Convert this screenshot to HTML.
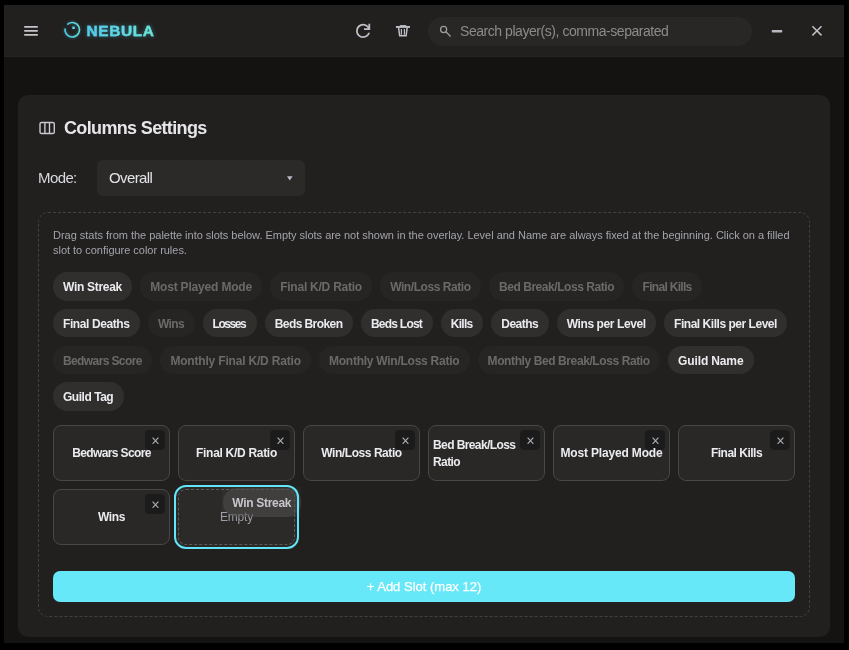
<!DOCTYPE html>
<html><head><meta charset="utf-8">
<style>
*{box-sizing:border-box;margin:0;padding:0}
html,body{width:849px;height:650px;background:#000;overflow:hidden;font-family:"Liberation Sans",sans-serif}
.win{will-change:transform}
.win{position:absolute;left:4px;top:5px;width:840px;height:638px;background:#141312;overflow:hidden}
.hdr{position:absolute;left:0;top:0;width:840px;height:52px;background:#21201f;border-bottom:1px solid #252423}
.abs{position:absolute}
.burger{left:20px;top:21px;width:14px;height:10px}
.burger i{position:absolute;left:0;width:14px;height:2px;background:#c9c9d1;border-radius:1px}
.logo{left:59px;top:16px;width:20px;height:20px}
.brand{left:82.6px;top:15.9px;font-weight:bold;font-size:15.4px;letter-spacing:0.62px;line-height:20px;
  background:linear-gradient(90deg,#52c8ee,#60d8e6 50%,#72e6cc);-webkit-background-clip:text;background-clip:text;color:transparent;-webkit-text-stroke:0.35px rgba(96,214,232,.85);
  filter:drop-shadow(0 0 2px rgba(80,210,235,.4))}
.search{left:424px;top:12px;width:324px;height:29px;border-radius:15px;background:#282726}
.ph{left:32px;top:0;line-height:29px;font-size:14px;letter-spacing:-0.45px;color:#8b8b8b;white-space:nowrap}
.card{position:absolute;left:14px;top:90px;width:812px;height:542px;background:#21201f;border-radius:10px}
.title{left:46px;top:21px;font-size:18px;font-weight:bold;color:#e6e6ea;letter-spacing:-0.65px;line-height:24px;white-space:nowrap}
.mode{left:20px;top:65px;font-size:15px;letter-spacing:-0.6px;color:#d8d8de;line-height:36px}
.select{left:79px;top:65px;width:208px;height:36px;border-radius:6px;background:#2b2a29}
.select span{position:absolute;left:12px;top:0;line-height:36px;font-size:15px;color:#e4e4e8;letter-spacing:-0.6px}
.select svg{position:absolute;left:189.9px;top:16px}
.dash{position:absolute;left:20px;top:117px;width:772px;height:404.5px;border:1px dashed #424140;border-radius:10px}
.desc{position:absolute;left:14px;top:15px;width:745px;font-size:11px;line-height:15px;color:#a3a3ac;letter-spacing:-0.02px}
.chips{position:absolute;left:14px;top:59px;width:742px;display:flex;flex-wrap:wrap;gap:8.3px 8px}
.chip{height:28.5px;border-radius:15px;background:#302f2e;color:#ebebef;font-weight:bold;font-size:12px;line-height:31px;text-align:center;white-space:nowrap;letter-spacing:-0.3px}
.chip.d{background:#262524;color:#6b6a6a}
.slots{position:absolute;left:14px;top:212px;width:742px;display:grid;grid-template-columns:repeat(6,117px);gap:8px}
.slot{position:relative;height:56px;border:1px solid #484746;border-radius:8px;background:#292827;display:flex;align-items:center;justify-content:center;padding:0 4px;color:#ebebef;font-weight:bold;font-size:12px;letter-spacing:-0.55px;line-height:17px}
.slot.empty{border:1px dashed #5b5a59;background:#2b2a29;box-shadow:0 0 0 2px #2b2a29;color:#9d9da5;font-weight:normal;letter-spacing:-0.2px}
.ring{position:absolute;left:134.7px;top:271.7px;width:125.3px;height:64.3px;border:2.3px solid #62e5f8;border-radius:12px}
.ghost{position:absolute;left:182.5px;top:274.4px;width:79.3px;height:30px;background:rgba(255,255,255,.025)}
.ghost div{position:absolute;left:1px;top:1px;width:78.5px;height:28.5px;border-radius:14px;background:rgba(78,77,76,.55);color:#c6c6cb;font-weight:bold;font-size:12px;letter-spacing:-0.3px;line-height:30.5px;text-align:center}
.slot span{position:relative;top:.7px}
.slot .x{position:absolute;right:4.3px;top:4.1px;width:19.6px;height:19.6px;border-radius:4.5px;background:#1c1b1b}
.slot .x svg{position:absolute;left:6.4px;top:6.8px}
.btn{position:absolute;left:14px;top:358px;width:742px;height:31px;border-radius:7px;background:#67e8f9;color:#fff;font-size:13px;text-align:center;line-height:31px;-webkit-text-stroke:0.25px #fff}
</style></head><body>
<div class="win">
  <div class="hdr">
    <div class="abs brand">NEBULA</div>
    <div class="abs search"><div class="abs ph">Search player(s), comma-separated</div></div>
    <svg class="abs" style="left:0;top:0;overflow:visible" width="840" height="52" viewBox="4 5 840 52">
      <g fill="#c4c4cc"><rect x="24" y="26.1" width="14" height="1.7" rx=".8"/><rect x="24" y="30.1" width="14" height="1.7" rx=".8"/><rect x="24" y="34.1" width="14" height="1.7" rx=".8"/></g>
      <defs><linearGradient id="lg" x1="0" x2="1" y1="0" y2="0"><stop offset="0" stop-color="#4ac5e8"/><stop offset="1" stop-color="#62e0d6"/></linearGradient></defs><g style="filter:drop-shadow(0 0 1.5px rgba(77,208,236,.45))"><path d="M65.02 29.13A7.25 7.25 0 1 0 67.74 24.03" fill="none" stroke="url(#lg)" stroke-width="1.6" stroke-linecap="round"/><rect x="72.3" y="26.6" width="2.5" height="2.5" rx=".3" fill="#55d6f0"/></g>
      <svg x="352.45" y="20.25" width="21.3" height="21.3" viewBox="0 -960 960 960"><path fill="#bdbdc5" d="M480-160q-134 0-227-93t-93-227q0-134 93-227t227-93q69 0 132 28.5T720-690v-110h80v280H520v-80h168q-32-56-87.5-88T480-720q-100 0-170 70t-70 170q0 100 70 170t170 70q77 0 139-44t87-116h84q-28 106-114 173t-196 67Z"/></svg>
      <g fill="#bdbdc5"><rect x="395.9" y="26" width="14.1" height="1.9"/><rect x="399.9" y="25.1" width="6.4" height="1.2"/></g>
      <g fill="none" stroke="#bdbdc5" stroke-width="1.5"><path d="M398.55 27.6L399.65 35.65H406.15L407.15 27.6"/><path d="M401.4 28.9V34.7M404.4 28.9V34.7" stroke-width="1.2"/></g>
      <g fill="none" stroke="#9c9c9c" stroke-width="1.3"><circle cx="443.6" cy="29.5" r="3.05"/><path d="M445.9 31.8L450.6 36.5"/></g>
      <rect x="771.7" y="30" width="10.6" height="2.4" rx="1" fill="#b9b9c1"/>
      <path d="M812.4 26.3L821.5 35.4M821.5 26.3L812.4 35.4" stroke="#c0c0c8" stroke-width="1.5" fill="none"/>
    </svg>
  </div>
  <div class="card">
    <svg class="abs" style="left:0;top:0;overflow:visible" width="60" height="60" viewBox="18 95 60 60"><g fill="none" stroke="#c9c9d1" stroke-width="1.4"><rect x="40" y="122.5" width="14.3" height="11" rx="1.6"/><path d="M44.9 122.5V133.5M49.5 122.5V133.5"/></g></svg>
    <div class="abs title">Columns Settings</div>
    <div class="abs mode">Mode:</div>
    <div class="abs select"><span>Overall</span><svg width="6" height="5" viewBox="0 0 6 5"><path d="M0 .2H5.6L2.8 4.6Z" fill="#b9b9c3"/></svg></div>
    <div class="dash">
      <div class="desc">Drag stats from the palette into slots below. Empty slots are not shown in the overlay. Level and Name are always fixed at the beginning. Click on a filled slot to configure color rules.</div>
      <div class="chips">
        <div class="chip" style="width:79.2px;letter-spacing:-0.302px;text-indent:-0.302px">Win Streak</div>
        <div class="chip d" style="width:122px;letter-spacing:-0.179px;text-indent:-0.179px">Most Played Mode</div>
        <div class="chip d" style="width:102px;letter-spacing:-0.239px;text-indent:-0.239px">Final K/D Ratio</div>
        <div class="chip d" style="width:100.8px;letter-spacing:-0.443px;text-indent:-0.443px">Win/Loss Ratio</div>
        <div class="chip d" style="width:135.5px;letter-spacing:-0.450px;text-indent:-0.450px">Bed Break/Loss Ratio</div>
        <div class="chip d" style="width:69.8px;letter-spacing:-0.689px;text-indent:-0.689px">Final Kills</div>
        <div class="chip" style="width:86.9px;letter-spacing:-0.405px;text-indent:-0.405px">Final Deaths</div>
        <div class="chip d" style="width:46.7px;letter-spacing:-0.621px;text-indent:-0.621px">Wins</div>
        <div class="chip" style="width:54.2px;letter-spacing:-1.432px;text-indent:-1.432px">Losses</div>
        <div class="chip" style="width:88.2px;letter-spacing:-0.583px;text-indent:-0.583px">Beds Broken</div>
        <div class="chip" style="width:71.9px;letter-spacing:-0.764px;text-indent:-0.764px">Beds Lost</div>
        <div class="chip" style="width:42.4px;letter-spacing:-0.736px;text-indent:-0.736px">Kills</div>
        <div class="chip" style="width:57.5px;letter-spacing:-0.503px;text-indent:-0.503px">Deaths</div>
        <div class="chip" style="width:99.3px;letter-spacing:-0.407px;text-indent:-0.407px">Wins per Level</div>
        <div class="chip" style="width:123.4px;letter-spacing:-0.466px;text-indent:-0.466px">Final Kills per Level</div>
        <div class="chip d" style="width:99.4px;letter-spacing:-0.610px;text-indent:-0.610px">Bedwars Score</div>
        <div class="chip d" style="width:150.6px;letter-spacing:-0.185px;text-indent:-0.185px">Monthly Final K/D Ratio</div>
        <div class="chip d" style="width:150.6px;letter-spacing:-0.252px;text-indent:-0.252px">Monthly Win/Loss Ratio</div>
        <div class="chip d" style="width:182.5px;letter-spacing:-0.403px;text-indent:-0.403px">Monthly Bed Break/Loss Ratio</div>
        <div class="chip" style="width:85.5px;letter-spacing:-0.132px;text-indent:-0.132px">Guild Name</div>
        <div class="chip" style="width:70.7px;letter-spacing:-0.469px;text-indent:-0.469px">Guild Tag</div>
      </div>
      <div class="slots">
        <div class="slot"><div class="x"><svg width="7" height="7.4" viewBox="0 0 7 7.4"><path d="M.6.6L6.4 6.8M6.4.6L.6 6.8" stroke="#aeaeb6" stroke-width="1.15" fill="none"/></svg></div><span style="letter-spacing:-0.618px">Bedwars Score</span></div>
        <div class="slot"><div class="x"><svg width="7" height="7.4" viewBox="0 0 7 7.4"><path d="M.6.6L6.4 6.8M6.4.6L.6 6.8" stroke="#aeaeb6" stroke-width="1.15" fill="none"/></svg></div><span style="letter-spacing:-0.296px">Final K/D Ratio</span></div>
        <div class="slot"><div class="x"><svg width="7" height="7.4" viewBox="0 0 7 7.4"><path d="M.6.6L6.4 6.8M6.4.6L.6 6.8" stroke="#aeaeb6" stroke-width="1.15" fill="none"/></svg></div><span style="letter-spacing:-0.443px">Win/Loss Ratio</span></div>
        <div class="slot"><div class="x"><svg width="7" height="7.4" viewBox="0 0 7 7.4"><path d="M.6.6L6.4 6.8M6.4.6L.6 6.8" stroke="#aeaeb6" stroke-width="1.15" fill="none"/></svg></div><span style="letter-spacing:-0.593px">Bed Break/Loss Ratio</span></div>
        <div class="slot"><div class="x"><svg width="7" height="7.4" viewBox="0 0 7 7.4"><path d="M.6.6L6.4 6.8M6.4.6L.6 6.8" stroke="#aeaeb6" stroke-width="1.15" fill="none"/></svg></div><span style="letter-spacing:-0.166px">Most Played Mode</span></div>
        <div class="slot"><div class="x"><svg width="7" height="7.4" viewBox="0 0 7 7.4"><path d="M.6.6L6.4 6.8M6.4.6L.6 6.8" stroke="#aeaeb6" stroke-width="1.15" fill="none"/></svg></div><span style="letter-spacing:-0.5px">Final Kills</span></div>
        <div class="slot"><div class="x"><svg width="7" height="7.4" viewBox="0 0 7 7.4"><path d="M.6.6L6.4 6.8M6.4.6L.6 6.8" stroke="#aeaeb6" stroke-width="1.15" fill="none"/></svg></div><span style="letter-spacing:-0.354px">Wins</span></div>
        <div class="slot empty"><span>Empty</span></div>
      </div>
      <div class="ghost"><div>Win Streak</div></div>
      <div class="ring"></div>
      <div class="btn">+ Add Slot (max 12)</div>
    </div>
  </div>
</div>
</body></html>
